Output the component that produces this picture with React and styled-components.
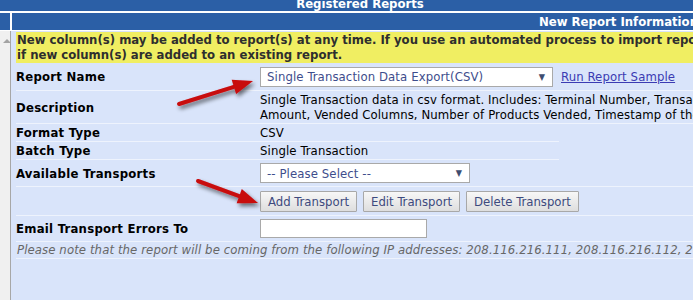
import styled, { createGlobalStyle } from 'styled-components';

const GlobalStyle = createGlobalStyle`
  html, body {
    margin: 0;
    padding: 0;
    background: #fff;
    overflow: hidden;
  }
`;

const rows = [
  { label: 'Format Type', value: 'CSV', h: 17 },
  { label: 'Batch Type', value: 'Single Transaction', h: 17 },
];

const Arrow = ({ x1, y1, x2, y2 }) => {
  const dx = x2 - x1;
  const dy = y2 - y1;
  const len = Math.sqrt(dx * dx + dy * dy);
  const ux = dx / len;
  const uy = dy / len;
  const bx = x2 - ux * 20;
  const by = y2 - uy * 20;
  const nx = -uy * 7.5;
  const ny = ux * 7.5;
  return (
    <g filter="url(#shadow)">
      <line x1={x1} y1={y1} x2={bx} y2={by} stroke="#c8090c" strokeWidth="4" strokeLinecap="round" />
      <polygon points={`${x2},${y2} ${bx + nx},${by + ny} ${bx - nx},${by - ny}`} fill="#c8090c" />
    </g>
  );
};

const App = () => (
  <Page>
    <GlobalStyle />
    <Frame>
      <TitleBar>
        <TitleText>Registered Reports</TitleText>
      </TitleBar>
      <SubBar>
        <SubCell />
        <SubCell>
          <SubTitle>New Report Information</SubTitle>
        </SubCell>
      </SubBar>
      <Body>
        <ScrollPanel>
          <ScrollUp />
        </ScrollPanel>
        <Content>
          <Notice>
            New column(s) may be added to report(s) at any time. If you use an automated process to import reports, please verify
            <br />
            if new column(s) are added to an existing report.
          </Notice>
          <Row h={27}>
            <Label>Report Name</Label>
            <Value>
              <SelectBox w={293}>
                <span>Single Transaction Data Export(CSV)</span>
                <Caret>▼</Caret>
              </SelectBox>
              <Link href="#">Run Report Sample</Link>
            </Value>
          </Row>
          <Row h={32}>
            <Label>Description</Label>
            <Desc>
              Single Transaction data in csv format. Includes: Terminal Number, Transaction Date, Transaction
              <br />
              Amount, Vended Columns, Number of Products Vended, Timestamp of the Transaction
            </Desc>
          </Row>
          {rows.map((r) => (
            <Row key={r.label} h={r.h} short>
              <Label>{r.label}</Label>
              <Plain>{r.value}</Plain>
            </Row>
          ))}
          <Row h={26}>
            <Label>Available Transports</Label>
            <Value>
              <SelectBox w={210}>
                <span>-- Please Select --</span>
                <Caret>▼</Caret>
              </SelectBox>
            </Value>
          </Row>
          <Row h={28}>
            <span />
            <Buttons>
              <Button type="button">Add Transport</Button>
              <Button type="button">Edit Transport</Button>
              <Button type="button">Delete Transport</Button>
            </Buttons>
          </Row>
          <Row h={25}>
            <Label>Email Transport Errors To</Label>
            <Value>
              <Input type="text" />
            </Value>
          </Row>
          <NoteRow h={16}>
            Please note that the report will be coming from the following IP addresses: 208.116.216.111, 208.116.216.112, 208.116.216.113
          </NoteRow>
        </Content>
      </Body>
    </Frame>
    <Overlay width="693" height="300" viewBox="0 0 693 300">
      <defs>
        <filter id="shadow" x="-20%" y="-50%" width="150%" height="220%">
          <feGaussianBlur in="SourceAlpha" stdDeviation="2" />
          <feOffset dx="2" dy="3" result="blur" />
          <feComponentTransfer>
            <feFuncA type="linear" slope="0.55" />
          </feComponentTransfer>
          <feMerge>
            <feMergeNode />
            <feMergeNode in="SourceGraphic" />
          </feMerge>
        </filter>
      </defs>
      <Arrow x1={179} y1={104} x2={253} y2={81} />
      <Arrow x1={198} y1={181} x2={258} y2={203} />
    </Overlay>
  </Page>
);

const Page = styled.div`
  position: relative;
  width: 693px;
  height: 300px;
  overflow: hidden;
  background: #fff;
  font-family: "DejaVu Sans Condensed", "DejaVu Sans", sans-serif;
  font-size: 13px;
`;

const Frame = styled.div`
  width: 720px;
  height: 300px;
  display: flex;
  flex-direction: column;
`;

const TitleBar = styled.div`
  height: 11px;
  overflow: hidden;
  background: #2b5fa6;
  color: #fff;
  font-weight: bold;
  text-align: center;
`;

const TitleText = styled.div`
  margin-top: -4px;
  line-height: 16px;
`;

const SubBar = styled.div`
  display: grid;
  grid-template-columns: 10px 1fr;
  gap: 2px;
  margin-top: 2px;
  height: 17px;
`;

const SubCell = styled.div`
  background: #2b5fa6;
  color: #fff;
  font-weight: bold;
  line-height: 17px;
  overflow: hidden;
  white-space: nowrap;
`;

const SubTitle = styled.div`
  padding-left: 527px;
`;

const Body = styled.div`
  flex: 1;
  display: grid;
  grid-template-columns: 11px 1fr;
  margin-top: 1px;
`;

const ScrollPanel = styled.div`
  background: #f0f0f0;
  border-right: 1px solid #a7a7a7;
  padding: 8px 0 0 3px;
`;

const ScrollUp = styled.div`
  width: 0;
  height: 0;
  border-left: 4px solid transparent;
  border-right: 4px solid transparent;
  border-bottom: 4px solid #a3a3a3;
`;

const Content = styled.div`
  background: #d9e4fa;
  padding: 1px 0 0 5px;
  display: flex;
  flex-direction: column;
`;

const Notice = styled.div`
  background: #f0ee62;
  color: #2e2e2e;
  font-weight: bold;
  line-height: 15px;
  height: 31px;
  padding-left: 1px;
  white-space: nowrap;
  overflow: hidden;
`;

const Row = styled.div`
  display: grid;
  grid-template-columns: 244px 1fr;
  align-items: center;
  height: ${(p) => p.h}px;
  width: ${(p) => (p.short ? '543px' : 'auto')};
  border-bottom: 1px solid #eef3fd;
  white-space: nowrap;
  letter-spacing: 0.1px;
`;

const Label = styled.div`
  font-weight: bold;
  color: #000;
  letter-spacing: 0.25px;
`;

const Value = styled.div`
  display: flex;
  align-items: center;
  gap: 8px;
`;

const Plain = styled.div`
  color: #000;
`;

const Desc = styled.div`
  color: #000;
  line-height: 15px;
`;

const SelectBox = styled.div`
  box-sizing: border-box;
  width: ${(p) => p.w}px;
  height: 20px;
  display: flex;
  align-items: center;
  justify-content: space-between;
  padding: 0 7px 0 6px;
  background: #fff;
  border: 1px solid #a9a9a9;
  color: #3e4d8c;
`;

const Caret = styled.span`
  font-size: 9px;
  color: #3e4d70;
`;

const Link = styled.a`
  color: #3b3bb3;
  text-decoration: underline;
`;

const Buttons = styled.div`
  display: flex;
  gap: 6px;
`;

const Button = styled.button`
  height: 21px;
  padding: 0 7px;
  font-family: inherit;
  font-size: 13px;
  letter-spacing: 0;
  color: #3d4a7e;
  background: linear-gradient(#f7f7f7, #dedede);
  border: 1px solid #a8a8a8;
  border-radius: 1px;
`;

const Input = styled.input`
  box-sizing: border-box;
  width: 167px;
  height: 19px;
  border: 1px solid #a9a9a9;
  background: #fff;
  margin: 0;
`;

const NoteRow = styled.div`
  height: ${(p) => p.h}px;
  line-height: 16px;
  border-bottom: 1px solid #eef3fd;
  color: #676767;
  font-style: italic;
  white-space: nowrap;
  padding-left: 1px;
  letter-spacing: 0.1px;
`;

const Overlay = styled.svg`
  position: absolute;
  top: 0;
  left: 0;
  pointer-events: none;
`;

export default App;
